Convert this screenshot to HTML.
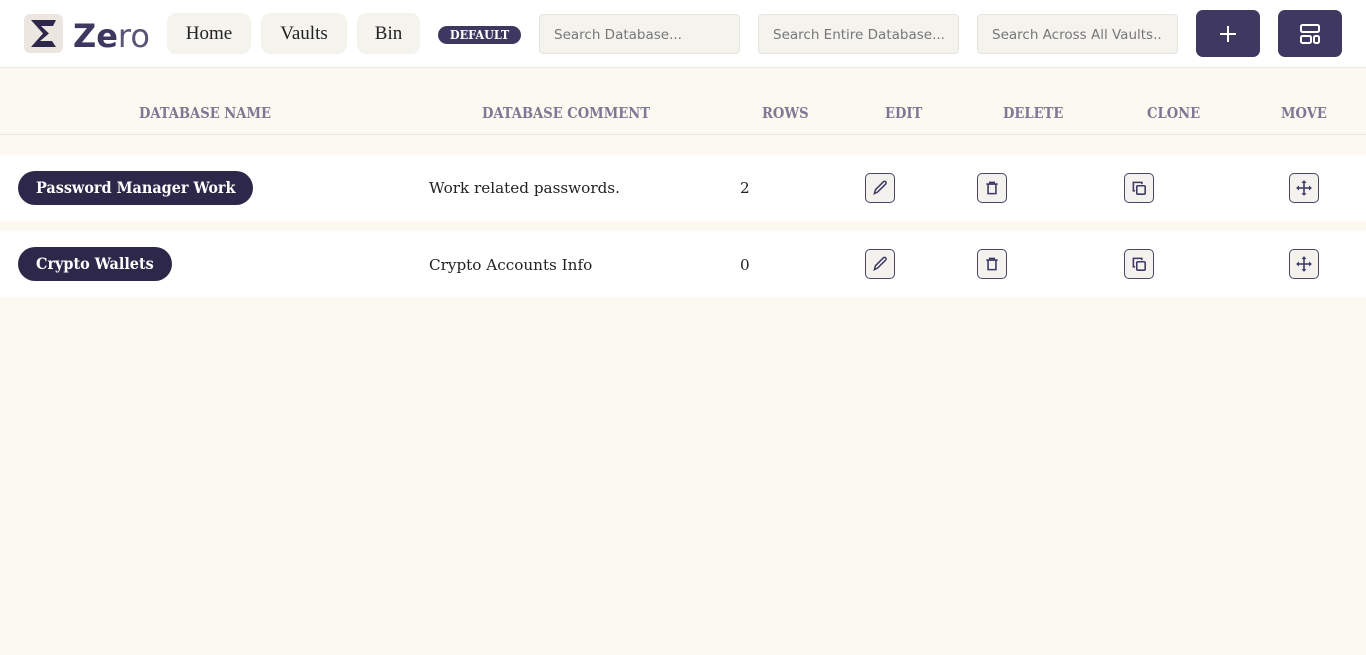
<!DOCTYPE html>
<html><head><meta charset="utf-8"><style>
*{box-sizing:border-box;margin:0;padding:0}
body{width:1366px;height:655px;background:#fcf9f1;font-family:"DejaVu Serif",serif;overflow:hidden;position:relative}
.hdr{position:absolute;left:0;top:0;width:1366px;height:68px;background:#fff;border-bottom:1px solid #eeebe4}
.abs{position:absolute}
.nav{position:absolute;top:13px;height:41px;background:#f4f3ee;border-radius:9px;font-family:"Liberation Serif",serif;font-size:19px;color:#222;display:flex;align-items:center;justify-content:center}
.badge{position:absolute;left:438px;top:26px;width:83px;height:18px;background:#3e3860;color:#fff;border-radius:9px;font-weight:bold;font-size:12.5px;text-align:center;line-height:18px;font-family:"DejaVu Serif Condensed","DejaVu Serif",serif}
.srch{position:absolute;top:14px;width:201px;height:40px;background:#f4f3ee;border:1px solid #e6e4de;border-radius:4px;font-family:"DejaVu Sans",sans-serif;font-size:13.5px;color:#777;padding-left:14px;line-height:40px;white-space:nowrap;overflow:hidden}
.btn{position:absolute;top:10px;width:64px;height:47px;background:#3f3961;border-radius:7px;display:flex;align-items:center;justify-content:center}
.th{position:absolute;top:105px;font-size:14.6px;font-weight:bold;color:#7d7893;font-family:"DejaVu Serif Condensed","DejaVu Serif",serif;line-height:18px}
.row{position:absolute;left:0;width:1366px;height:66px;background:#fff}
.pill{position:absolute;left:18px;height:34px;background:#2d2849;color:#fff;border-radius:17px;font-weight:bold;font-size:16px;line-height:34px;padding:0 18px;font-family:"DejaVu Serif Condensed","DejaVu Serif",serif}
.txt{position:absolute;font-size:15.2px;color:#222;line-height:18px}
.ib{position:absolute;width:30px;height:30px;border:1.3px solid #4a4468;border-radius:5px;background:#f3f2ef;display:flex;align-items:center;justify-content:center}
</style></head><body>
<div class="hdr">
 <div class="abs" style="left:24px;top:14px;width:39px;height:39px;background:#ebe7e0;border-radius:6px">
  <svg width="39" height="39" viewBox="0 0 39 39"><path d="M7 6h25l-3 6H17l8 7.5-9 7.5h12l4 6H7l12-13.5z" fill="#2d2849"/></svg>
 </div>
 <div class="abs" style="left:73px;top:14px;font-family:'DejaVu Sans',sans-serif;font-size:32px;color:#3e3860;line-height:44px"><b>Ze</b><span style="color:#5a5577">ro</span></div>
 <div class="nav" style="left:167px;width:84px">Home</div>
 <div class="nav" style="left:261px;width:86px">Vaults</div>
 <div class="nav" style="left:357px;width:63px">Bin</div>
 <div class="badge">DEFAULT</div>
 <div class="srch" style="left:539px">Search Database...</div>
 <div class="srch" style="left:758px">Search Entire Database...</div>
 <div class="srch" style="left:977px">Search Across All Vaults..</div>
 <div class="btn" style="left:1196px"><svg width="20" height="20" viewBox="0 0 20 20"><path d="M10 2v16M2 10h16" stroke="#fff" stroke-width="2"/></svg></div>
 <div class="btn" style="left:1278px"><svg width="22" height="22" viewBox="0 0 22 22" fill="none" stroke="#fff" stroke-width="2"><rect x="2" y="2" width="18" height="7" rx="1.5"/><rect x="2" y="13" width="10" height="7" rx="1.5"/><rect x="15" y="13" width="5" height="7" rx="1.5"/></svg></div>
</div>
<div class="th" style="left:139px">DATABASE NAME</div>
<div class="th" style="left:482px">DATABASE COMMENT</div>
<div class="th" style="left:762px">ROWS</div>
<div class="th" style="left:885px">EDIT</div>
<div class="th" style="left:1003px">DELETE</div>
<div class="th" style="left:1147px">CLONE</div>
<div class="th" style="left:1281px">MOVE</div>
<div class="abs" style="left:0;top:134px;width:1366px;height:1px;background:#ebe7df"></div>

<div class="row" style="top:155px"></div>
<div class="row" style="top:231px"></div>

<div class="pill" style="top:171px">Password Manager Work</div>
<div class="txt" style="left:429px;top:179px">Work related passwords.</div>
<div class="txt" style="left:740px;top:179px">2</div>
<div class="pill" style="top:247px">Crypto Wallets</div>
<div class="txt" style="left:429px;top:256px">Crypto Accounts Info</div>
<div class="txt" style="left:740px;top:256px">0</div>

<div class="ib" style="left:865px;top:173px"><svg width="18" height="18" viewBox="0 0 16 16" fill="none" stroke="#3e3860" stroke-width="1.3"><path d="M3 13l1-3.5 7-7a1.4 1.4 0 012 2l-7 7z"/></svg></div>
<div class="ib" style="left:977px;top:173px"><svg width="18" height="18" viewBox="0 0 16 16" fill="none" stroke="#3e3860" stroke-width="1.4"><path d="M3 4.5h10M6 4.5V3h4v1.5M4.5 4.5v8.5h7V4.5"/></svg></div>
<div class="ib" style="left:1124px;top:173px"><svg width="18" height="18" viewBox="0 0 16 16" fill="none" stroke="#3e3860" stroke-width="1.4"><rect x="6" y="6" width="7.5" height="7.5" rx="1"/><path d="M4.5 10.5H3V3h7.5v1.5"/></svg></div>
<div class="ib" style="left:1289px;top:173px"><svg width="18" height="18" viewBox="0 0 16 16" fill="#3e3860" stroke="#3e3860" stroke-width="1.4"><path d="M8 2v12M2 8h12" fill="none"/><path d="M8 1l2.2 2.5h-4.4zM8 15l2.2-2.5h-4.4zM1 8l2.5-2.2v4.4zM15 8l-2.5-2.2v4.4z" stroke="none"/></svg></div>
<div class="ib" style="left:865px;top:249px"><svg width="18" height="18" viewBox="0 0 16 16" fill="none" stroke="#3e3860" stroke-width="1.3"><path d="M3 13l1-3.5 7-7a1.4 1.4 0 012 2l-7 7z"/></svg></div>
<div class="ib" style="left:977px;top:249px"><svg width="18" height="18" viewBox="0 0 16 16" fill="none" stroke="#3e3860" stroke-width="1.4"><path d="M3 4.5h10M6 4.5V3h4v1.5M4.5 4.5v8.5h7V4.5"/></svg></div>
<div class="ib" style="left:1124px;top:249px"><svg width="18" height="18" viewBox="0 0 16 16" fill="none" stroke="#3e3860" stroke-width="1.4"><rect x="6" y="6" width="7.5" height="7.5" rx="1"/><path d="M4.5 10.5H3V3h7.5v1.5"/></svg></div>
<div class="ib" style="left:1289px;top:249px"><svg width="18" height="18" viewBox="0 0 16 16" fill="#3e3860" stroke="#3e3860" stroke-width="1.4"><path d="M8 2v12M2 8h12" fill="none"/><path d="M8 1l2.2 2.5h-4.4zM8 15l2.2-2.5h-4.4zM1 8l2.5-2.2v4.4zM15 8l-2.5-2.2v4.4z" stroke="none"/></svg></div>
</body></html>
